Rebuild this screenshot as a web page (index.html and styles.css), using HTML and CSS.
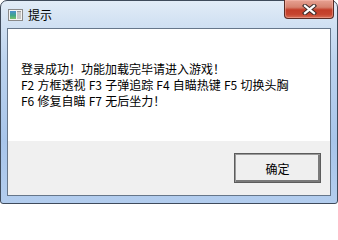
FILE: index.html
```html
<!DOCTYPE html>
<html lang="zh-CN">
<head>
<meta charset="utf-8">
<title>提示</title>
<link rel="stylesheet" href="styles.css">
</head>
<body>
<div class="window">
  <div class="titlebar">
    <svg class="app-icon" width="16" height="16" viewBox="0 0 16 16">
      <defs>
        <linearGradient id="ig" x1="0" y1="0" x2="0" y2="1">
          <stop offset="0" stop-color="#4b8fd0"/>
          <stop offset="0.55" stop-color="#3fa58a"/>
          <stop offset="1" stop-color="#7cc06a"/>
        </linearGradient>
      </defs>
      <rect x="0.5" y="2.5" width="14" height="11" fill="#f4f4f4" stroke="#8a8a8a"/>
      <rect x="2" y="4" width="6" height="8" fill="url(#ig)"/>
      <rect x="9" y="4" width="4" height="8" fill="#c8c8c8"/>
      <rect x="9" y="4" width="4" height="1" fill="#9a9a9a"/>
    </svg>
    <span class="title">提示</span>
    <div class="close">
      <svg width="15" height="11" viewBox="0 0 15 11">
        <path d="M3 1.8 L12 9.2 M12 1.8 L3 9.2" stroke="#3b2a28" stroke-width="4.2" stroke-linecap="square" fill="none"/>
        <path d="M3 1.8 L12 9.2 M12 1.8 L3 9.2" stroke="#ffffff" stroke-width="2.2" stroke-linecap="square" fill="none"/>
      </svg>
    </div>
  </div>
  <div class="client">
    <div class="message">
      <p>登录成功<span class="punct">！</span>功能加载完毕请进入游戏<span class="punct">！</span></p>
      <p>F2 方框透视 F3 子弹追踪 F4 自瞄热键 F5 切换头胸</p>
      <p>F6 修复自瞄 F7 无后坐力<span class="punct">！</span></p>
    </div>
    <div class="footer">
      <button class="btn" type="button">确定</button>
    </div>
  </div>
</div>
</body>
</html>
```
FILE: styles.css
```css
html, body {
  margin: 0;
  padding: 0;
  background: #ffffff;
}

.window {
  box-sizing: border-box;
  width: 338px;
  height: 204px;
  border: 1px solid #3f4b5b;
  border-radius: 7px 7px 3px 3px;
  background: linear-gradient(180deg, #e2ecf7 0px, #d3e2f3 20px, #bcd3ee 60px, #a8c5ea 140px, #b3cdee 204px);
  padding: 0 6px 7px 6px;
  display: flex;
  flex-direction: column;
  font-family: "Noto Sans CJK SC", "Noto Sans", sans-serif;
}

.titlebar {
  height: 27px;
  display: flex;
  align-items: flex-start;
}

.app-icon {
  margin: 6px 0 0 1px;
  flex: none;
}

.title {
  margin: 6px 0 0 4px;
  font-size: 12px;
  line-height: 16px;
  color: #000;
  flex: 1;
}

.close {
  width: 50px;
  height: 19px;
  box-sizing: border-box;
  margin: -1px -3px 0 0;
  border: 1px solid #5a2b24;
  border-top: none;
  border-radius: 0 0 4px 4px;
  background: linear-gradient(180deg, #e7a293 0%, #d6826f 40%, #c23d28 55%, #c6452f 80%, #d66f57 100%);
  box-shadow: inset 0 0 0 1px rgba(255, 200, 190, 0.4);
  display: flex;
  align-items: center;
  justify-content: center;
}

.client {
  width: 324px;
  height: 168px;
  box-sizing: border-box;
  border: 1px solid #66768a;
  background: #ffffff;
  display: flex;
  flex-direction: column;
}

.message {
  flex: none;
  height: 112px;
  box-sizing: border-box;
  padding: 32px 0 0 13px;
}

.message p {
  margin: 0;
  font-size: 12px;
  line-height: 16px;
  color: #000;
  white-space: nowrap;
  word-spacing: 0.5px;
}

.punct {
  font-family: "Noto Sans CJK TC", "Noto Sans CJK SC", sans-serif;
}

.footer {
  flex: 1;
  background: #f0f0f0;
  display: flex;
  justify-content: flex-end;
  align-items: flex-start;
  padding: 12px 9px 0 0;
}

.btn {
  width: 87px;
  height: 30px;
  box-sizing: border-box;
  margin: 0;
  padding: 0;
  border: 1px solid #5c5c5c;
  background: #efefef;
  box-shadow: inset 1px 1px 0 #9a9a9a, inset -2px -2px 0 #7a7a7a;
  font-family: "Noto Sans CJK SC", "Noto Sans", sans-serif;
  font-size: 12px;
  color: #000;
}
```
